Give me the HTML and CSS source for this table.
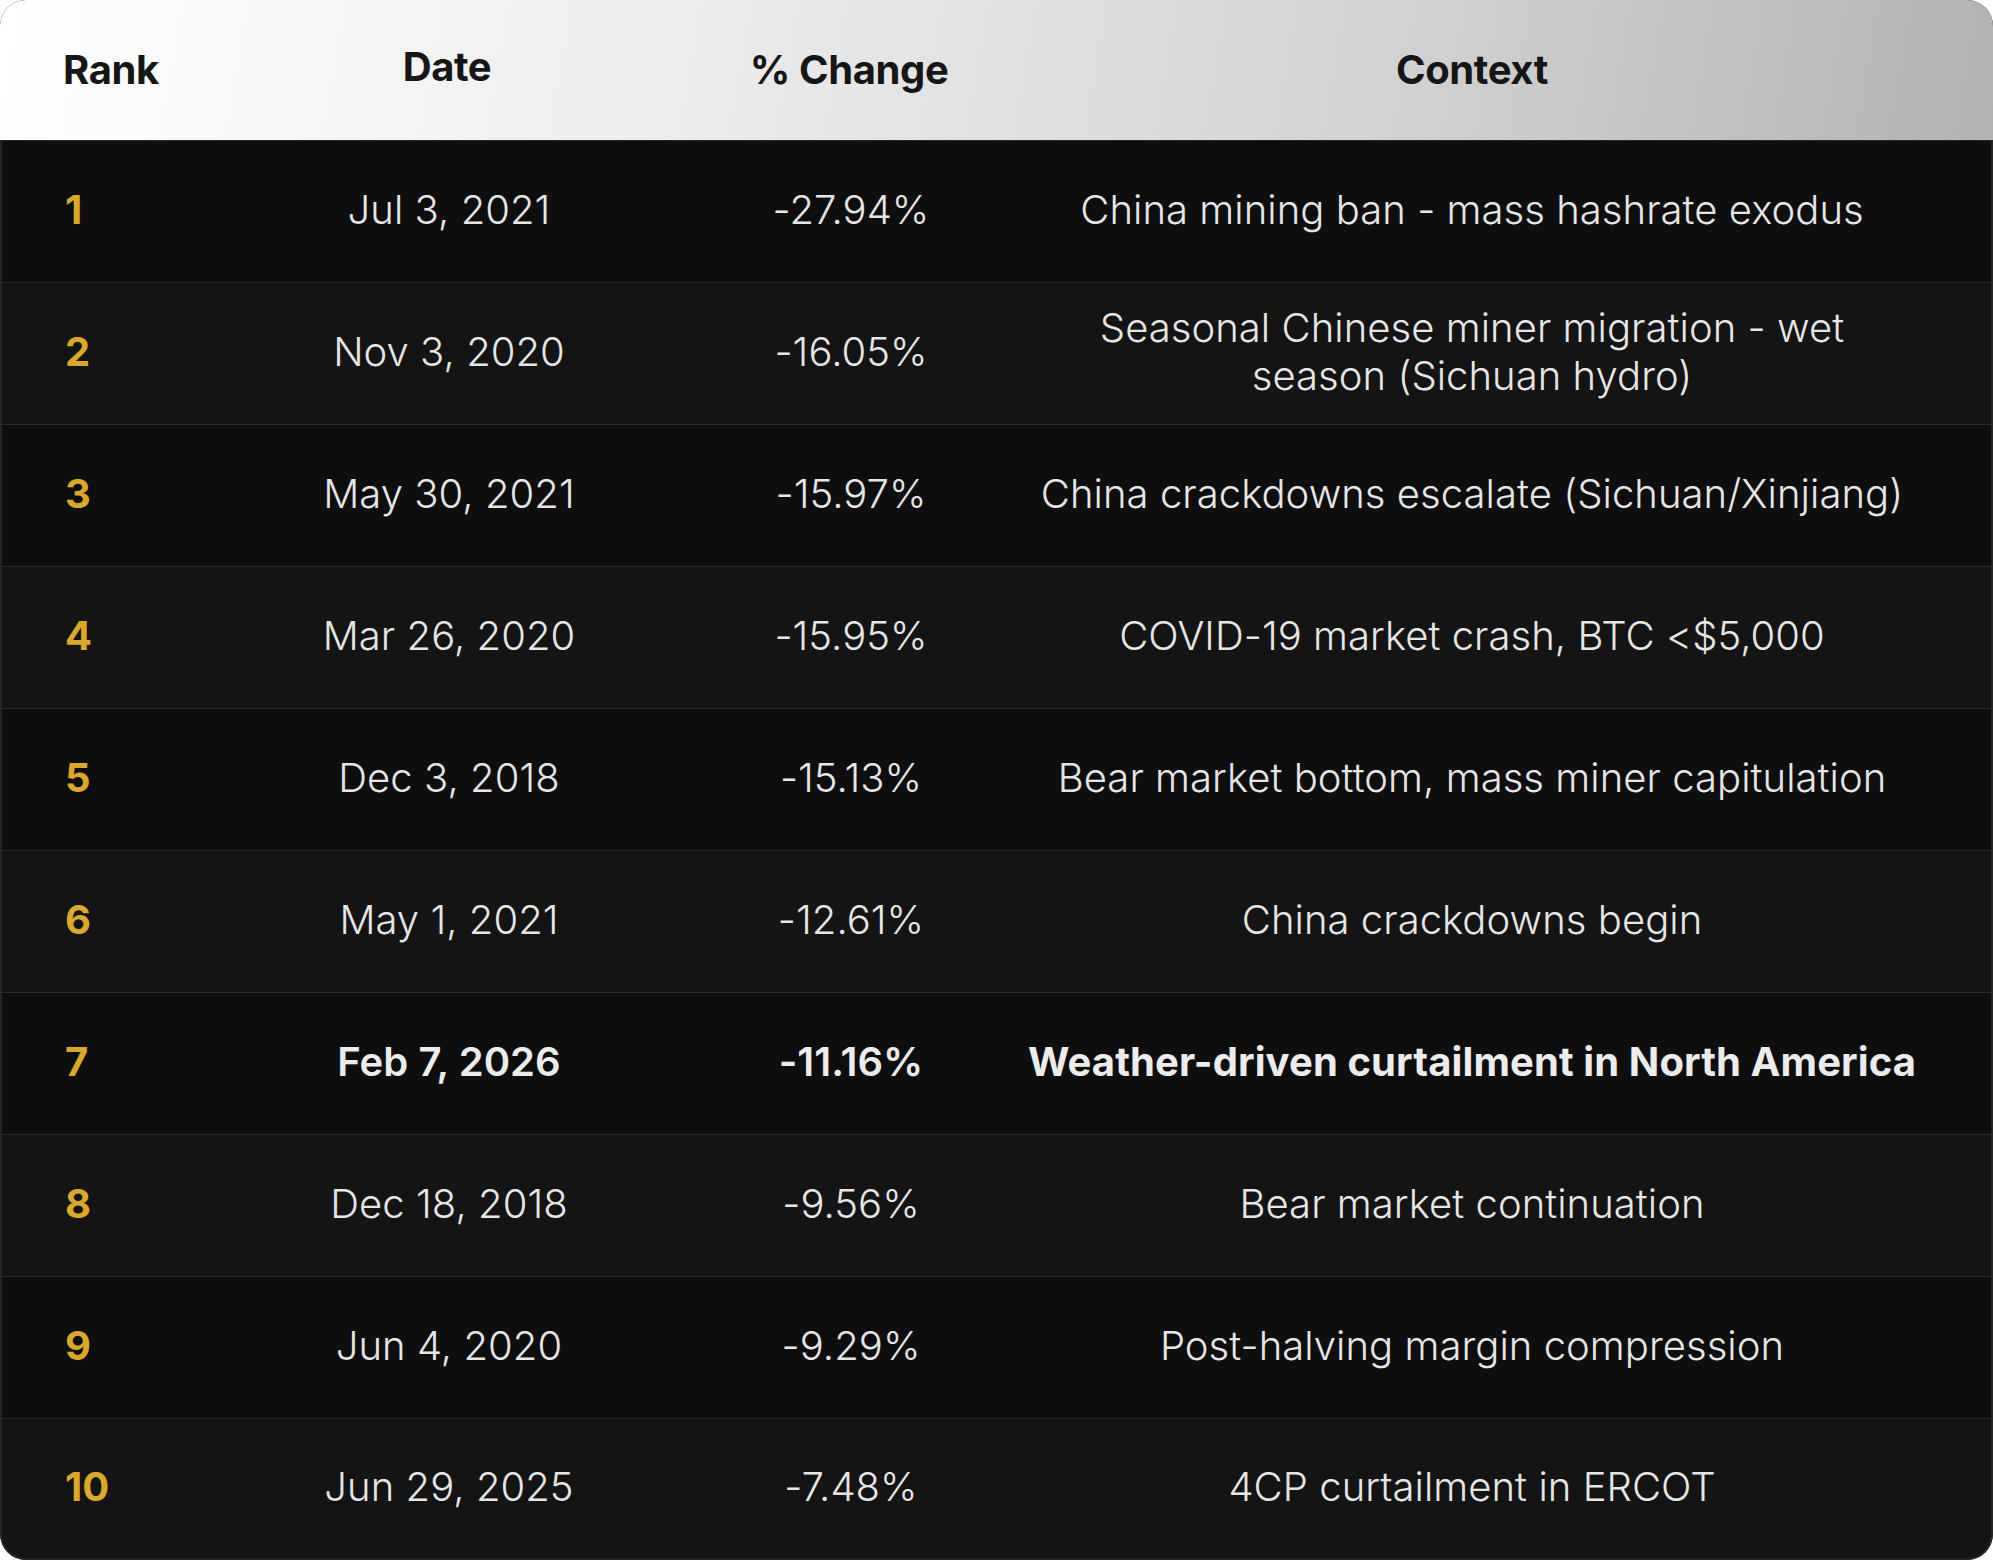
FILE: index.html
```html
<!DOCTYPE html>
<html lang="en">
<head>
<meta charset="utf-8">
<title>Largest hashrate drops</title>
<link rel="stylesheet" href="styles.css">
</head>
<body>
<div class="table">
  <div class="row head">
    <div class="cell rank">Rank</div>
    <div class="cell date date-head">Date</div>
    <div class="cell change">% Change</div>
    <div class="cell context">Context</div>
  </div>
  <div class="row odd">
    <div class="cell rank">1</div>
    <div class="cell date">Jul 3, 2021</div>
    <div class="cell change">-27.94%</div>
    <div class="cell context">China mining ban - mass hashrate exodus</div>
  </div>
  <div class="row even">
    <div class="cell rank">2</div>
    <div class="cell date">Nov 3, 2020</div>
    <div class="cell change">-16.05%</div>
    <div class="cell context">Seasonal Chinese miner migration - wet<br>season (Sichuan hydro)</div>
  </div>
  <div class="row odd">
    <div class="cell rank">3</div>
    <div class="cell date">May 30, 2021</div>
    <div class="cell change">-15.97%</div>
    <div class="cell context">China crackdowns escalate (Sichuan/Xinjiang)</div>
  </div>
  <div class="row even">
    <div class="cell rank">4</div>
    <div class="cell date">Mar 26, 2020</div>
    <div class="cell change">-15.95%</div>
    <div class="cell context">COVID-19 market crash, BTC &lt;$5,000</div>
  </div>
  <div class="row odd">
    <div class="cell rank">5</div>
    <div class="cell date">Dec 3, 2018</div>
    <div class="cell change">-15.13%</div>
    <div class="cell context">Bear market bottom, mass miner capitulation</div>
  </div>
  <div class="row even">
    <div class="cell rank">6</div>
    <div class="cell date">May 1, 2021</div>
    <div class="cell change">-12.61%</div>
    <div class="cell context">China crackdowns begin</div>
  </div>
  <div class="row odd highlight">
    <div class="cell rank">7</div>
    <div class="cell date">Feb 7, 2026</div>
    <div class="cell change">-11.16%</div>
    <div class="cell context">Weather-driven curtailment in North America</div>
  </div>
  <div class="row even">
    <div class="cell rank">8</div>
    <div class="cell date">Dec 18, 2018</div>
    <div class="cell change">-9.56%</div>
    <div class="cell context">Bear market continuation</div>
  </div>
  <div class="row odd">
    <div class="cell rank">9</div>
    <div class="cell date">Jun 4, 2020</div>
    <div class="cell change">-9.29%</div>
    <div class="cell context">Post-halving margin compression</div>
  </div>
  <div class="row even last">
    <div class="cell rank">10</div>
    <div class="cell date">Jun 29, 2025</div>
    <div class="cell change">-7.48%</div>
    <div class="cell context">4CP curtailment in ERCOT</div>
  </div>
</div>
</body>
</html>
```

FILE: styles.css
```css
* {
  box-sizing: border-box;
}

html, body {
  margin: 0;
  padding: 0;
  background: #ffffff;
}

body {
  font-family: Inter, "Noto Sans", "Liberation Sans", sans-serif;
  width: 1993px;
  height: 1560px;
  overflow: hidden;
}

.table {
  width: 1993px;
  height: 1560px;
  display: flex;
  flex-direction: column;
  border-radius: 26px;
  overflow: hidden;
  background: #0e0e0e;
}

.row {
  display: grid;
  grid-template-columns: 147px 600px 204px 1fr;
  align-items: center;
  height: 142px;
  padding-bottom: 4px;
  border-top: 1px solid #2a2a2a;
  border-left: 2px solid #262626;
  border-right: 2px solid #262626;
  color: #e6e6e6;
  font-size: 40px;
  font-weight: 290;
  letter-spacing: 0.05px;
  line-height: 48px;
}

.row.head {
  height: 140px;
  padding-bottom: 0;
  border: none;
  background: linear-gradient(100deg, #ffffff 0%, #ececec 35%, #d2d2d2 70%, #b2b2b2 100%);
  color: #161616;
  font-weight: 700;
  letter-spacing: -0.4px;
}

.row.odd {
  background: #0e0e0e;
}

.row.even {
  background: #141414;
}

.row.last {
  border-bottom: 2px solid #262626;
  border-radius: 0 0 26px 26px;
}

.cell {
  text-align: center;
}

.cell.rank {
  text-align: left;
  padding-left: 63px;
}

.row:not(.head) .cell.rank {
  color: #d9a82c;
  font-weight: 700;
}

.date-head {
  padding-bottom: 7px;
}

.row.highlight {
  font-weight: 600;
  color: #ececec;
}

.row.highlight .context {
  font-weight: 650;
  letter-spacing: 0.1px;
}
```
